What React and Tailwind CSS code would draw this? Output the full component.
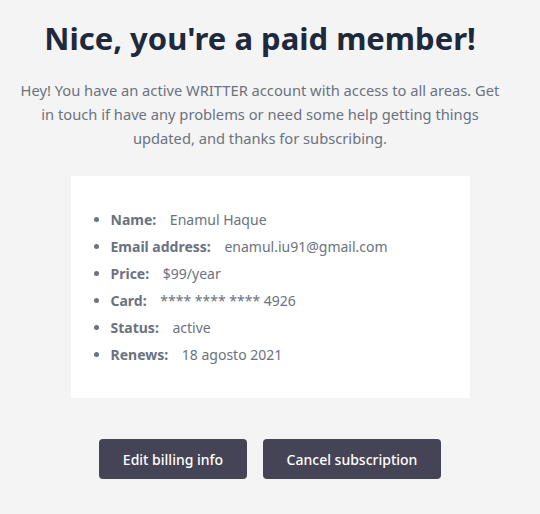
import React from "react";

const details = [
  { label: "Name:", value: "Enamul Haque" },
  { label: "Email address:", value: "enamul.iu91@gmail.com" },
  { label: "Price:", value: "$99/year" },
  { label: "Card:", value: "**** **** **** 4926" },
  { label: "Status:", value: "active" },
  { label: "Renews:", value: "18 agosto 2021" },
];

const App = () => {
  return (
    <div
      className="min-h-[514px] w-full bg-[#f4f4f4] flex flex-col items-center pt-[14px]"
      style={{ fontFamily: '"Noto Sans", sans-serif' }}
    >
      {/* Intro text */}
      <div className="w-[480px] self-start ml-[20px] flex flex-col items-center">
        <h1 className="text-[31px] leading-[48px] font-bold text-[#1e293b] text-center">
          Nice, you're a paid member!
        </h1>
        <p className="mt-[16px] text-[14.7px] leading-[24px] text-[#6b7280] text-center">
          Hey! You have an active WRITTER account with access to all areas. Get
          in touch if have any problems or need some help getting things
          updated, and thanks for subscribing.
        </p>
      </div>

      {/* Account details */}
      <div className="mt-[26px] w-[399px] bg-white px-[16px] py-[30px]">
        <ul className="list-disc pl-[24px] text-[14px] text-[#6b7280]">
          {details.map((item) => (
            <li key={item.label} className="leading-[27px]">
              <span className="font-bold mr-[10px]">{item.label}</span>{" "}
              <span>{item.value}</span>
            </li>
          ))}
        </ul>
      </div>

      {/* Actions */}
      <div className="mt-[41px] flex gap-4">
        <button className="w-[148px] h-[40px] rounded bg-[#454456] text-white text-[14px] font-medium">
          Edit billing info
        </button>
        <button className="w-[178px] h-[40px] rounded bg-[#454456] text-white text-[14px] font-medium">
          Cancel subscription
        </button>
      </div>
    </div>
  );
};

export default App;
